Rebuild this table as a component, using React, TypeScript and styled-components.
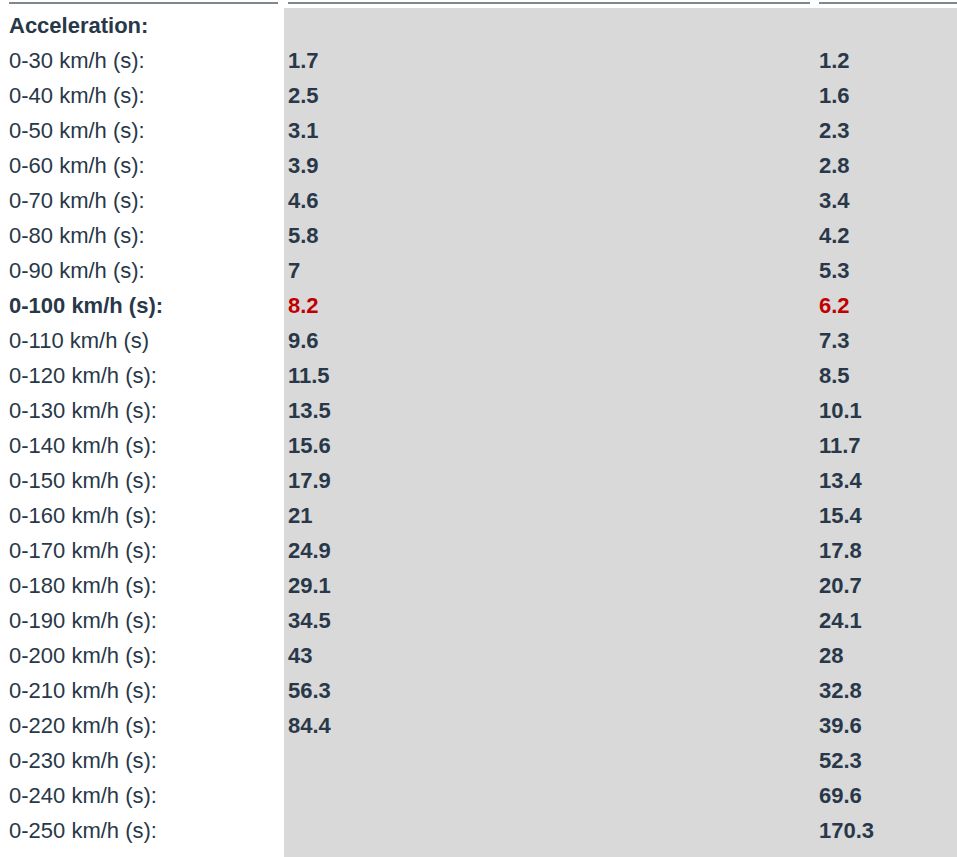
import * as React from 'react';
import styled, { createGlobalStyle } from 'styled-components';

type Row = {
  label: string,
  first?: string,
  second?: string,
  highlight?: boolean,
}

const ROWS: Row[] = [
  { label: '0-30 km/h (s):', first: '1.7', second: '1.2' },
  { label: '0-40 km/h (s):', first: '2.5', second: '1.6' },
  { label: '0-50 km/h (s):', first: '3.1', second: '2.3' },
  { label: '0-60 km/h (s):', first: '3.9', second: '2.8' },
  { label: '0-70 km/h (s):', first: '4.6', second: '3.4' },
  { label: '0-80 km/h (s):', first: '5.8', second: '4.2' },
  { label: '0-90 km/h (s):', first: '7', second: '5.3' },
  { label: '0-100 km/h (s):', first: '8.2', second: '6.2', highlight: true },
  { label: '0-110 km/h (s)', first: '9.6', second: '7.3' },
  { label: '0-120 km/h (s):', first: '11.5', second: '8.5' },
  { label: '0-130 km/h (s):', first: '13.5', second: '10.1' },
  { label: '0-140 km/h (s):', first: '15.6', second: '11.7' },
  { label: '0-150 km/h (s):', first: '17.9', second: '13.4' },
  { label: '0-160 km/h (s):', first: '21', second: '15.4' },
  { label: '0-170 km/h (s):', first: '24.9', second: '17.8' },
  { label: '0-180 km/h (s):', first: '29.1', second: '20.7' },
  { label: '0-190 km/h (s):', first: '34.5', second: '24.1' },
  { label: '0-200 km/h (s):', first: '43', second: '28' },
  { label: '0-210 km/h (s):', first: '56.3', second: '32.8' },
  { label: '0-220 km/h (s):', first: '84.4', second: '39.6' },
  { label: '0-230 km/h (s):', second: '52.3' },
  { label: '0-240 km/h (s):', second: '69.6' },
  { label: '0-250 km/h (s):', second: '170.3' },
];

const GlobalStyle = createGlobalStyle`
  body {
    margin: 0;
    background: #ffffff;
    font-family: "Liberation Sans", Arial, sans-serif;
  }
`;

const Sheet = styled.div`
  display: grid;
  grid-template-columns: 284px 531px 1fr;
  width: 957px;
  overflow: hidden;
  color: #283849;
  font-size: 22px;
`;

const HeadCell = styled.div<{ $inset: string }>`
  height: 8px;
  padding: 2px ${p => p.$inset};
  box-sizing: border-box;
`;

const Rule = styled.div`
  height: 2px;
  background: #7e8890;
`;

const LabelCell = styled.div<{ $bold?: boolean }>`
  height: 35px;
  line-height: 35px;
  padding-left: 9px;
  white-space: nowrap;
  font-weight: ${p => (p.$bold ? 700 : 400)};
`;

const ValueCell = styled.div<{ $highlight?: boolean }>`
  height: 35px;
  line-height: 35px;
  padding-left: 4px;
  background: #d9d9d9;
  font-weight: 700;
  white-space: nowrap;
  color: ${p => (p.$highlight ? '#c00000' : '#283849')};
`;

const Filler = styled.div<{ $grey?: boolean }>`
  height: 20px;
  background: ${p => (p.$grey ? '#d9d9d9' : 'transparent')};
`;

const App = (): React.ReactElement => (
  <>
    <GlobalStyle />
    <Sheet>
      <HeadCell $inset="6px 0 9px"><Rule /></HeadCell>
      <HeadCell $inset="5px 0 4px"><Rule /></HeadCell>
      <HeadCell $inset="0 0 4px"><Rule /></HeadCell>

      <LabelCell $bold>Acceleration:</LabelCell>
      <ValueCell />
      <ValueCell />

      {ROWS.map(row => (
        <React.Fragment key={row.label}>
          <LabelCell $bold={row.highlight}>{row.label}</LabelCell>
          <ValueCell $highlight={row.highlight}>{row.first}</ValueCell>
          <ValueCell $highlight={row.highlight}>{row.second}</ValueCell>
        </React.Fragment>
      ))}

      <Filler />
      <Filler $grey />
      <Filler $grey />
    </Sheet>
  </>
);

export default App;
